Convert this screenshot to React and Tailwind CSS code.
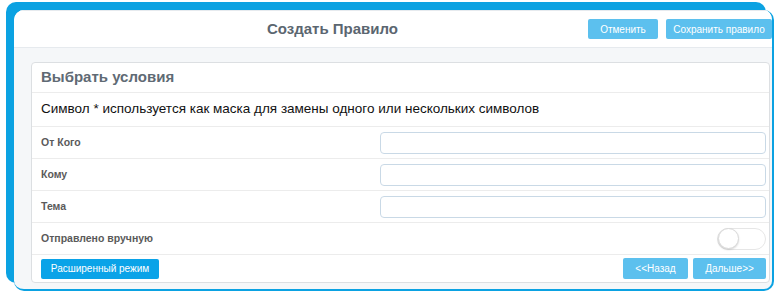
import { useState } from "react";

const rows = ["От Кого", "Кому", "Тема"];

export default function App() {
  const [manual, setManual] = useState(false);

  return (
    <div className="w-[778px] h-[296px] bg-white pl-[14px] pt-[10px] font-['Liberation_Sans',Arial,sans-serif]">
      {/* card with the blue offset frame */}
      <div className="w-[760px] h-[281px] bg-[#f5f7f9] rounded-[10px] border-r-2 border-b-2 border-[#0ba2e2] shadow-[-8px_-8px_0_0_#0ba2e2] overflow-hidden flex flex-col">
        {/* header */}
        <div className="h-[38px] shrink-0 bg-white border-t border-b border-[#e6eaee] flex items-center pl-[17px]">
          <div className="flex-1 text-center text-[15px] font-bold text-[#5b6670] pl-[46px]">
            Создать Правило
          </div>
          <div className="flex gap-[8px]">
            <button className="w-[70px] h-[20px] rounded-[2px] bg-[#5cc0ee] text-white text-[10px]">
              Отменить
            </button>
            <button className="w-[106px] h-[20px] rounded-[2px] bg-[#5cc0ee] text-white text-[10px]">
              Сохранить правило
            </button>
          </div>
        </div>

        {/* body */}
        <div className="flex-1 pt-[14px] pl-[17px] pr-[2px] pb-[6px]">
          <div className="bg-white border border-[#dcdfe2] rounded-[4px] h-full flex flex-col">
            <div className="h-[30px] flex items-center px-[9px] border-b border-[#ececec]">
              <span className="text-[15px] font-bold text-[#5f6a74]">Выбрать условия</span>
            </div>
            <div className="h-[34px] flex items-center px-[9px] border-b border-[#ececec]">
              <span className="text-[13.5px] text-[#111]">
                Символ * используется как маска для замены одного или нескольких символов
              </span>
            </div>
            {rows.map((label) => (
              <div
                key={label}
                className="h-[32px] flex items-center pl-[9px] pr-[3px] border-b border-[#ececec]"
              >
                <span className="w-[339px] text-[10.5px] font-bold text-[#5a5a5a]">{label}</span>
                <input
                  type="text"
                  className="flex-1 h-[22px] rounded-[4px] border border-[#c9d9e6] bg-white outline-none"
                />
              </div>
            ))}
            <div className="h-[32px] flex items-center pl-[9px] pr-[3px] border-b border-[#ececec]">
              <span className="flex-1 text-[10.5px] font-bold text-[#5a5a5a]">Отправлено вручную</span>
              <button
                onClick={() => setManual(!manual)}
                className="w-[49px] h-[22px] rounded-full border border-[#e6e6e6] bg-white flex items-center"
              >
                <span className="w-[21px] h-[21px] rounded-full bg-white border border-[#d9d9d9] shadow-[0_1px_2px_rgba(0,0,0,0.15)]" />
              </button>
            </div>
            <div className="flex-1 flex items-center justify-between pl-[9px] pr-[3px]">
              <button className="w-[118px] h-[20px] rounded-[2px] bg-[#0aa3e8] text-white text-[10px]">
                Расширенный режим
              </button>
              <div className="flex gap-[5px]">
                <button className="w-[65px] h-[21px] rounded-[2px] bg-[#5cc0ee] text-white text-[10px]">
                  &lt;&lt;Назад
                </button>
                <button className="w-[73px] h-[21px] rounded-[2px] bg-[#5cc0ee] text-white text-[10px]">
                  Дальше&gt;&gt;
                </button>
              </div>
            </div>
          </div>
        </div>
      </div>
    </div>
  );
}
